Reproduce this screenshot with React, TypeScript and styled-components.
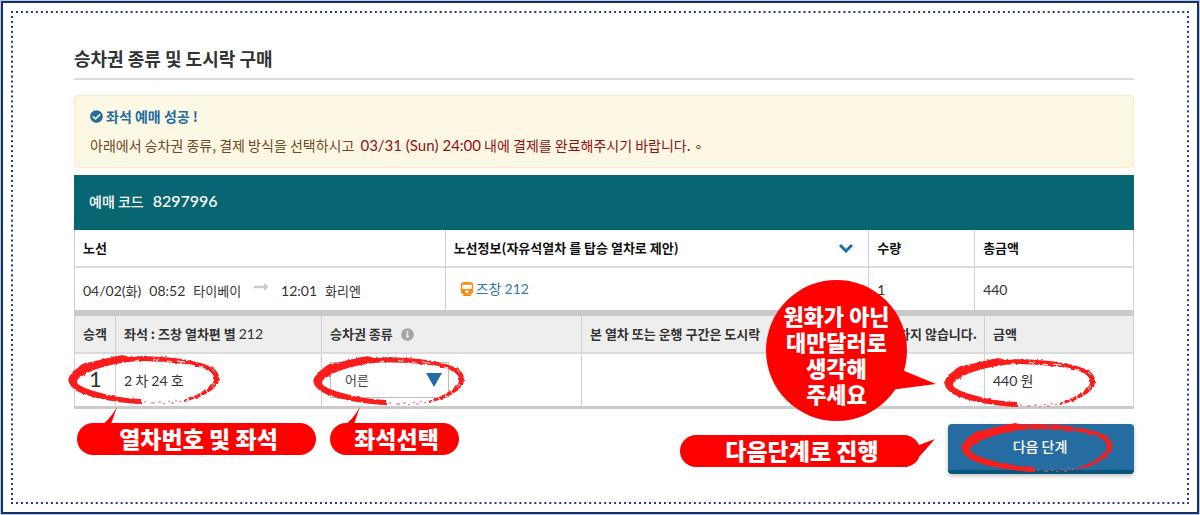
import React from 'react';
import styled, { createGlobalStyle, css } from 'styled-components';
import { FaCheckCircle, FaInfoCircle, FaLongArrowAltRight, FaTrain } from 'react-icons/fa';

const NAVY = '#14306e';
const TEAL = '#086672';
const BLUE = '#256da1';
const RED = '#ff0000';
const LINE = '#d0d0d0';

const GlobalStyle = createGlobalStyle`
  *, *::before, *::after { box-sizing: border-box; }
  body {
    margin: 0;
    background: #bcc8de;
    color: #333;
    font-family: "Noto Sans CJK KR", "Noto Sans", sans-serif;
    font-size: 14px;
    line-height: 20px;
  }
`;

const Page = styled.div`
  display: flex;
  min-height: 100vh;
  padding: 1px;
`;

const Frame = styled.div`
  flex: 1;
  display: flex;
  padding: 8px;
  border: 2px solid ${NAVY};
  background: #fff;
`;

const dots = (angle: number) => `linear-gradient(${angle}deg, #1f3a80 2px, transparent 2px)`;

const Dotted = styled.main`
  flex: 1;
  padding: 35px 55px 28px 63px;
  background-image: ${dots(90)}, ${dots(90)}, ${dots(180)}, ${dots(180)};
  background-size: 5px 2px, 5px 2px, 2px 5px, 2px 5px;
  background-position: top left, bottom left, top left, top right;
  background-repeat: round no-repeat, round no-repeat, no-repeat round, no-repeat round;
`;

const Title = styled.h1`
  margin: 0 0 15px;
  padding-bottom: 8px;
  border-bottom: 2px solid #dcdcdc;
  font-size: 18px;
  line-height: 24px;
  font-weight: 700;
`;

const Notice = styled.section`
  margin-bottom: 7px;
  padding: 10px 15px 12px;
  border: 1px solid #f9e9cb;
  border-radius: 4px;
  background: #fdf8e4;
  color: #6f4823;
`;

const NoticeTitle = styled.h2`
  display: flex;
  align-items: center;
  gap: 3px;
  margin: 0 0 9px;
  color: ${BLUE};
  font-size: 14px;
  line-height: 20px;
  font-weight: 700;
`;

const NoticeText = styled.p`
  margin: 0;
  line-height: 20px;
`;

const Deadline = styled.span`
  margin-left: 3px;
  color: #8f0f12;
`;

const Latin = styled.span<{ $size?: number }>`
  font-family: Lato, "Noto Sans CJK KR", sans-serif;
  font-size: ${(p) => p.$size ?? 14}px;
  font-weight: 400;
`;

const CodeBar = styled.div`
  display: flex;
  align-items: center;
  gap: 9px;
  height: 55px;
  padding: 0 15px 3px;
  background: ${TEAL};
  color: #fff;
  font-weight: 500;
`;

const Code = styled.strong`
  font-family: Lato, sans-serif;
  font-size: 16px;
  font-weight: 500;
`;

const Table = styled.table<{ $last?: boolean }>`
  width: 100%;
  table-layout: fixed;
  border-collapse: separate;
  border-spacing: 0;
  border-right: 1px solid ${LINE};
  border-bottom: ${(p) => (p.$last ? '3px' : '6px')} solid #cacaca;
`;

const cell = css`
  position: relative;
  padding: 0 7px 0 8px;
  border-left: 1px solid ${LINE};
  text-align: left;
  white-space: nowrap;
`;

const Th = styled.th<{ $shaded?: boolean }>`
  ${cell}
  height: 38px;
  border-bottom: 2px solid #dcdcdc;
  background: ${(p) => (p.$shaded ? '#eeeeee' : '#fff')};
  color: ${(p) => (p.$shaded ? '#333' : '#111')};
  font-size: 13px;
  font-weight: 700;
`;

const Td = styled.td<{ $height: number }>`
  ${cell}
  height: ${(p) => p.$height}px;
`;

const HeadRow = styled.div<{ $between?: boolean }>`
  display: flex;
  align-items: center;
  gap: 8px;
  justify-content: ${(p) => (p.$between ? 'space-between' : 'flex-start')};
`;

const Chevron = styled.svg`
  margin-right: 8px;
  fill: none;
  stroke: ${BLUE};
  stroke-width: 3;
`;

const Trip = styled.div`
  display: flex;
  align-items: center;
  gap: 8px;
  padding-top: 4px;
  font-size: 13px;
`;

const TripArrow = styled(FaLongArrowAltRight)`
  margin: 0 4px 8px;
  color: #cbcbcb;
`;

const TrainLink = styled.a`
  display: inline-flex;
  align-items: center;
  gap: 2px;
  padding-left: 6px;
  color: #3a77a5;
  text-decoration: none;
`;

const Passenger = styled.div`
  text-align: center;
`;

const SelectBox = styled.div`
  position: relative;
  width: 119px;
`;

const Select = styled.select`
  appearance: none;
  width: 100%;
  height: 36px;
  padding: 0 14px;
  border: 1px solid #bdbdbd;
  border-radius: 0;
  background: #fff;
  color: #444;
  font: inherit;
  font-size: 13px;
`;

const SelectArrow = styled.svg`
  position: absolute;
  top: 11px;
  right: 7px;
  pointer-events: none;
`;

const Actions = styled.div`
  display: flex;
  justify-content: flex-end;
  margin-top: 15px;
`;

const NextWrap = styled.div`
  position: relative;
`;

const NextButton = styled.button`
  display: block;
  width: 186px;
  height: 50px;
  padding: 0 2px 3px 0;
  border: 0;
  border-bottom: 4px solid #04577b;
  border-radius: 4px;
  background: ${BLUE};
  box-shadow: 0 2px 4px rgba(0, 0, 0, 0.25);
  color: #fff;
  font: inherit;
  font-weight: 500;
`;

const Ring = styled.svg<{ $left: number; $top: number }>`
  position: absolute;
  z-index: 2;
  left: ${(p) => p.$left}px;
  top: ${(p) => p.$top}px;
  overflow: visible;
  pointer-events: none;
`;

const Bubble = styled.div<{ $left: number; $top: number; $width: number }>`
  position: absolute;
  z-index: 3;
  left: ${(p) => p.$left}px;
  top: ${(p) => p.$top}px;
  width: ${(p) => p.$width}px;
  height: 32px;
  padding-left: 4px;
  border-radius: 16px;
  background: ${RED};
  color: #fff;
  font-size: 23px;
  line-height: 30px;
  font-weight: 900;
  text-align: center;
  white-space: nowrap;
`;

const Disc = styled.div`
  position: absolute;
  z-index: 3;
  top: -36px;
  right: 77px;
  display: flex;
  align-items: center;
  justify-content: center;
  width: 141px;
  height: 141px;
  padding-top: 7px;
  border-radius: 50%;
  background: ${RED};
  color: #fff;
  font-size: 22px;
  line-height: 26px;
  font-weight: 900;
  text-align: center;
`;

const Tail = styled.svg<{ $left: number; $top: number }>`
  position: absolute;
  left: ${(p) => p.$left}px;
  top: ${(p) => p.$top}px;
  fill: ${RED};
`;

function BrushDefs() {
  return (
    <svg width="0" height="0" style={{ position: 'absolute' }} aria-hidden="true">
      <defs>
        <filter id="rough" x="-5%" y="-15%" width="110%" height="130%">
          <feTurbulence type="fractalNoise" baseFrequency="0.3" numOctaves="1" seed="7" />
          <feDisplacementMap in="SourceGraphic" scale="3" xChannelSelector="R" yChannelSelector="G" />
        </filter>
        <mask id="flecks" maskUnits="userSpaceOnUse" x="-5" y="-5" width="160" height="60">
          <rect x="-5" y="-5" width="160" height="60" fill="#fff" />
          <g stroke="#000" strokeWidth="1" fill="none">
            <path d="M66 6l4 -1M84 5l6 -1M98 6l5 1M108 6l8 1M119 9l7 2M124 5l6 2M130 11l6 3M134 8l5 2M139 15l3 4M143 14l3 3" />
            <path d="M143 31l3 -2M137 35l2 3M131 38l2 3M124 41l2 3M118 42l1 4" />
          </g>
        </mask>
      </defs>
    </svg>
  );
}

function BrushRing({ left, top }: { left: number; top: number }) {
  return (
    <Ring $left={left} $top={top} width="150" height="50" viewBox="0 0 150 50" aria-hidden="true">
      <g filter="url(#rough)">
        <path
          mask="url(#flecks)"
          fill="#fb1a1c"
          d="M72 49C50 48 25 44 10 37C-3 30 -3 22 6 15C12 11 11 8 22 7C34 4 48 1 54 0L60 2L76 1L92 2C112 3 133 7 143 12C154 20 151 28 143 35C135 41 125 44 115 47L115 45C126 41 138 35 144 28C147 21 144 18 136 14C120 8 98 7 76 6C62 6 52 8 42 10C28 13 20 17 15 20C5 25 6 29 16 33C32 39 50 43 72 44Z"
        />
      </g>
      <path
        fill="none"
        stroke="#fb5a5c"
        strokeWidth="1"
        d="M75 47h2M82 48h4M89 47h3M94 49l2 -1M99 46l2 1M102 48h3M106 45l2 1M110 47l2 -1"
      />
    </Ring>
  );
}

export default function App() {
  return (
    <Page>
      <GlobalStyle />
      <BrushDefs />
      <Frame>
        <Dotted>
          <Title>승차권 종류 및 도시락 구매</Title>

          <Notice>
            <NoticeTitle>
              <FaCheckCircle size={13} />
              <span>좌석 예매 성공 !</span>
            </NoticeTitle>
            <NoticeText>
              아래에서 승차권 종류, 결제 방식을 선택하시고{' '}
              <Deadline>
                <Latin $size={15}>03/31 (Sun) 24:00</Latin> 내에 결제를 완료해주시기 바랍니다.
              </Deadline>{' '}
              ∘
            </NoticeText>
          </Notice>

          <CodeBar>
            <span>예매 코드</span>
            <Code>8297996</Code>
          </CodeBar>

          <Table>
            <colgroup>
              <col style={{ width: '35%' }} />
              <col style={{ width: '40%' }} />
              <col style={{ width: '10%' }} />
              <col style={{ width: '15%' }} />
            </colgroup>
            <thead>
              <tr>
                <Th>노선</Th>
                <Th>
                  <HeadRow $between>
                    <span>노선정보(자유석열차 를 탑승 열차로 제안)</span>
                    <Chevron width="14" height="10" viewBox="0 0 14 10" aria-hidden="true">
                      <path d="M1 2L7 8L13 2" />
                    </Chevron>
                  </HeadRow>
                </Th>
                <Th>수량</Th>
                <Th>총금액</Th>
              </tr>
            </thead>
            <tbody>
              <tr>
                <Td $height={42}>
                  <Trip>
                    <span>
                      <Latin>04/02(</Latin>화<Latin>)</Latin>
                    </span>
                    <Latin>08:52</Latin>
                    <span>타이베이</span>
                    <TripArrow size={16} />
                    <Latin>12:01</Latin>
                    <span>화리엔</span>
                  </Trip>
                </Td>
                <Td $height={42}>
                  <TrainLink href="#train">
                    <FaTrain size={14} color="#ff8a0c" />
                    <span>
                      즈창 <Latin>212</Latin>
                    </span>
                  </TrainLink>
                </Td>
                <Td $height={42}>
                  <Latin>1</Latin>
                </Td>
                <Td $height={42}>
                  <Latin>440</Latin>
                </Td>
              </tr>
            </tbody>
          </Table>

          <Table $last>
            <colgroup>
              <col style={{ width: 41 }} />
              <col style={{ width: 206 }} />
              <col style={{ width: 260 }} />
              <col />
              <col style={{ width: 149 }} />
            </colgroup>
            <thead>
              <tr>
                <Th $shaded>승객</Th>
                <Th $shaded>
                  좌석 : 즈창 열차편 별 <Latin>212</Latin>
                </Th>
                <Th $shaded>
                  <HeadRow>
                    <label htmlFor="ticket">승차권 종류</label>
                    <FaInfoCircle size={13} color="#a5a5a5" />
                  </HeadRow>
                </Th>
                <Th $shaded>
                  <HeadRow $between>
                    <span>본 열차 또는 운행 구간은 도시락</span>
                    <span>하지 않습니다.</span>
                  </HeadRow>
                  <Disc>
                    원화가 아닌
                    <br />
                    대만달러로
                    <br />
                    생각해
                    <br />
                    주세요
                    <Tail $left={124} $top={90} width="46" height="22" viewBox="0 0 46 22">
                      <path d="M12 0L46 14L0 20Z" />
                    </Tail>
                  </Disc>
                </Th>
                <Th $shaded>금액</Th>
              </tr>
            </thead>
            <tbody>
              <tr>
                <Td $height={52}>
                  <Passenger>
                    <Latin $size={22}>1</Latin>
                  </Passenger>
                  <BrushRing left={-6} top={1} />
                  <Bubble $left={2} $top={69} $width={239}>
                    열차번호 및 좌석
                    <Tail $left={22} $top={-16} width="20" height="20" viewBox="0 0 20 20">
                      <path d="M18 0L11 20L0 20Q10 14 18 0Z" />
                    </Tail>
                  </Bubble>
                </Td>
                <Td $height={52}>
                  <Latin>2</Latin> 차 <Latin>24</Latin> 호
                </Td>
                <Td $height={52}>
                  <SelectBox>
                    <Select id="ticket" defaultValue="adult">
                      <option value="adult">어른</option>
                      <option value="child">어린이</option>
                    </Select>
                    <SelectArrow width="16" height="14" viewBox="0 0 16 14" aria-hidden="true">
                      <path d="M0 0H16L8 14Z" fill={BLUE} />
                    </SelectArrow>
                  </SelectBox>
                  <BrushRing left={-8} top={2} />
                  <Bubble $left={8} $top={69} $width={129}>
                    좌석선택
                    <Tail $left={12} $top={-16} width="20" height="20" viewBox="0 0 20 20">
                      <path d="M18 0L11 20L0 20Q10 14 18 0Z" />
                    </Tail>
                  </Bubble>
                </Td>
                <Td $height={52} />
                <Td $height={52}>
                  <Latin>440</Latin> 원
                  <BrushRing left={-40} top={4} />
                </Td>
              </tr>
            </tbody>
          </Table>

          <Actions>
            <NextWrap>
              <NextButton type="button">다음 단계</NextButton>
              <BrushRing left={14} top={-1} />
              <Bubble $left={-268} $top={11} $width={240}>
                다음단계로 진행
                <Tail $left={218} $top={4} width="37" height="28" viewBox="0 0 37 28">
                  <path d="M37 0L21 6L0 10L2 28Q18 28 21 18Z" />
                </Tail>
              </Bubble>
            </NextWrap>
          </Actions>
        </Dotted>
      </Frame>
    </Page>
  );
}
